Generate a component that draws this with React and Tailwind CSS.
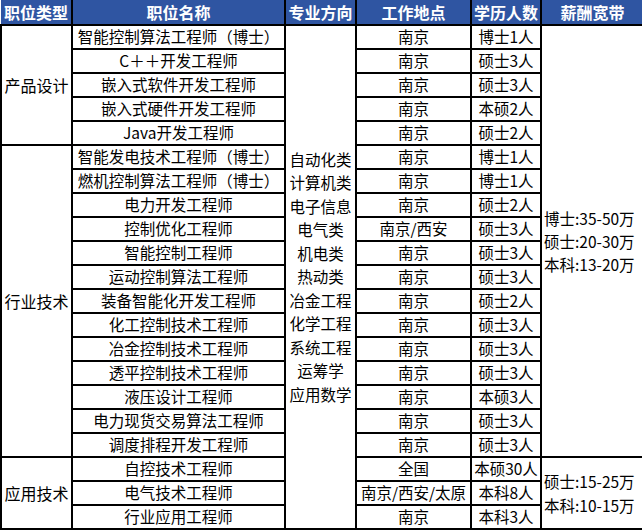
import React from 'react';

const rows = [
  ['智能控制算法工程师（博士）', '南京', '博士1人'],
  ['C＋＋开发工程师', '南京', '硕士3人'],
  ['嵌入式软件开发工程师', '南京', '硕士3人'],
  ['嵌入式硬件开发工程师', '南京', '本硕2人'],
  ['Java开发工程师', '南京', '硕士2人'],
  ['智能发电技术工程师（博士）', '南京', '博士1人'],
  ['燃机控制算法工程师（博士）', '南京', '博士1人'],
  ['电力开发工程师', '南京', '硕士2人'],
  ['控制优化工程师', '南京/西安', '硕士3人'],
  ['智能控制工程师', '南京', '硕士3人'],
  ['运动控制算法工程师', '南京', '硕士3人'],
  ['装备智能化开发工程师', '南京', '硕士2人'],
  ['化工控制技术工程师', '南京', '硕士3人'],
  ['冶金控制技术工程师', '南京', '硕士3人'],
  ['透平控制技术工程师', '南京', '硕士3人'],
  ['液压设计工程师', '南京', '本硕3人'],
  ['电力现货交易算法工程师', '南京', '硕士3人'],
  ['调度排程开发工程师', '南京', '硕士3人'],
  ['自控技术工程师', '全国', '本硕30人'],
  ['电气技术工程师', '南京/西安/太原', '本科8人'],
  ['行业应用工程师', '南京', '本科3人'],
];

const majors = ['自动化类', '计算机类', '电子信息', '电气类', '机电类', '热动类', '冶金工程', '化学工程', '系统工程', '运筹学', '应用数学'];

const td = 'border-2 border-black p-0 text-center align-middle whitespace-nowrap';
const th = 'border-x-2 border-b-2 border-black p-0 text-center align-middle font-bold text-white';

function App() {
  return (
    <div className="w-[642px] h-[530px] bg-white overflow-hidden" style={{ fontFamily: '"Noto Sans CJK SC", "Noto Sans", sans-serif' }}>
      <table className="table-fixed border-collapse w-[642px] text-[15.5px] leading-none text-black">
        <colgroup>
          <col className="w-[71px]" />
          <col className="w-[213px]" />
          <col className="w-[71px]" />
          <col className="w-[115px]" />
          <col className="w-[70px]" />
          <col className="w-[102px]" />
        </colgroup>
        <thead>
          <tr className="h-[25px] bg-[#2f55a2] text-[16px]">
            <th className={th + ' border-l-0'}>职位类型</th>
            <th className={th}>职位名称</th>
            <th className={th}>专业方向</th>
            <th className={th}>工作地点</th>
            <th className={th}>学历人数</th>
            <th className={th + ' border-r-0'}>薪酬宽带</th>
          </tr>
        </thead>
        <tbody>
          {rows.map((r, i) => (
            <tr key={i} className="h-[24px]">
              {i === 0 && <td rowSpan={5} className={td + ' text-[16px]'}>产品设计</td>}
              {i === 5 && <td rowSpan={13} className={td + ' text-[16px]'}>行业技术</td>}
              {i === 18 && <td rowSpan={3} className={td + ' text-[16px]'}>应用技术</td>}
              <td className={td}>{r[0]}</td>
              {i === 0 && (
                <td rowSpan={21} className={td}>
                  <div className="flex flex-col items-center leading-[23.5px]">
                    {majors.map((m) => (
                      <span key={m}>{m}</span>
                    ))}
                  </div>
                </td>
              )}
              <td className={td}>{r[1]}</td>
              <td className={td}>{r[2]}</td>
              {i === 0 && (
                <td rowSpan={18} className={td + ' text-left pl-[2px]'}>
                  <div className="flex flex-col leading-[23px]">
                    <span>博士:35-50万</span>
                    <span>硕士:20-30万</span>
                    <span>本科:13-20万</span>
                  </div>
                </td>
              )}
              {i === 18 && (
                <td rowSpan={3} className={td + ' text-left pl-[2px]'}>
                  <div className="flex flex-col leading-[24px]">
                    <span>硕士:15-25万</span>
                    <span>本科:10-15万</span>
                  </div>
                </td>
              )}
            </tr>
          ))}
        </tbody>
      </table>
    </div>
  );
}

export default App;
